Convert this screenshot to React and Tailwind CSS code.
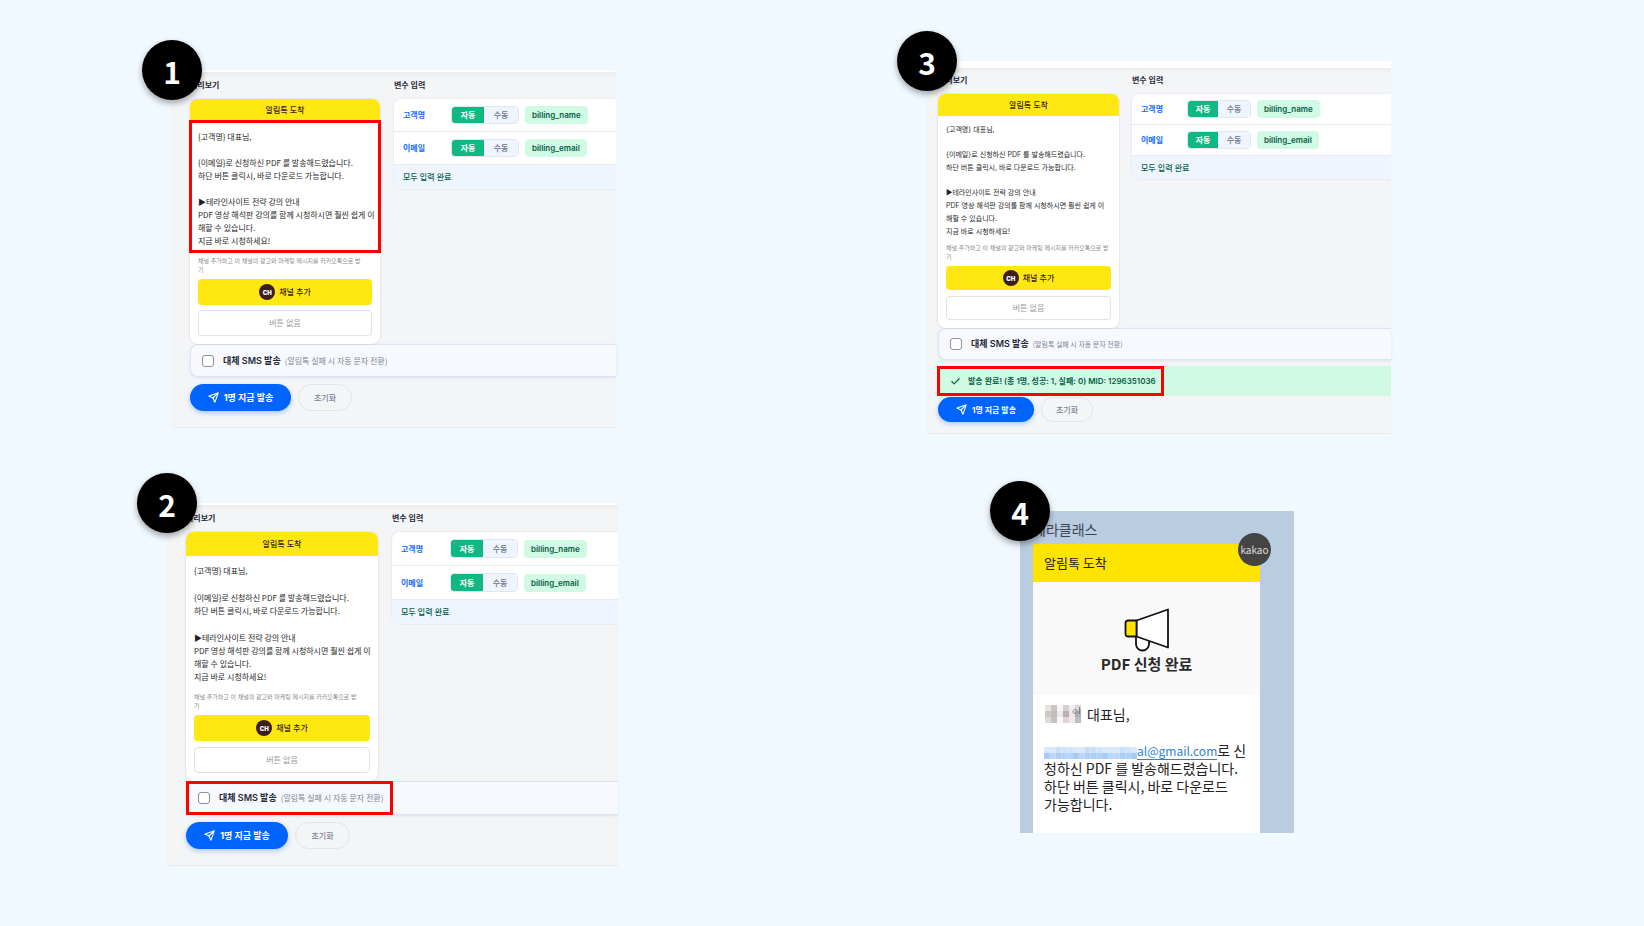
import { Send, Check } from "lucide-react";

const SIZES = {
  a: {
    outer: "ml-[5px] w-[444px]",
    panel: "border-t-2 pl-[18px] pt-[6px] pb-4",
    columns: "gap-[14px]",
    card: "w-[190px]",
    head: "h-[21px]",
    message: "gap-[13px] pt-[10px] pb-[6px] leading-[13px] text-[8px] font-['Noto_Sans_CJK_KR',sans-serif]",
    notice: "pt-[3px]",
    buttons: "gap-[5px] pt-[5px]",
    button: "h-[26px]",
    row: "h-[33px]",
    footer: "h-[24px]",
    label: "w-[48px]",
    toggle: "h-[18px] w-[68px]",
    sms: "h-[33px]",
    smsHint: "text-[8px]",
    actions: "pt-[7px]",
    send: "h-[27px] w-[101px] text-[9px]",
    reset: "h-[27px] w-[54px]",
  },
  b: {
    outer: "w-[451px]",
    panel: "border-t-2 pl-[19px] pt-[6px] pb-4",
    columns: "gap-[14px]",
    card: "w-[192px]",
    head: "h-[24px]",
    message: "gap-[14px] pt-[8px] pb-[8px] leading-[13px] text-[8px] font-['Noto_Sans_CJK_KR',sans-serif]",
    notice: "pt-[1px]",
    buttons: "gap-[6px] pt-[5px]",
    button: "h-[26px]",
    row: "h-[34px]",
    footer: "h-[24px]",
    label: "w-[49px]",
    toggle: "h-[19px] w-[68px]",
    sms: "h-[34px]",
    smsHint: "text-[8px]",
    actions: "pt-[7px]",
    send: "h-[27px] w-[102px] text-[9px]",
    reset: "h-[27px] w-[55px]",
  },
  c: {
    outer: "w-[464px]",
    panel: "border-t-7 pl-[11px] pt-[5px] pb-[11px]",
    columns: "gap-[13px]",
    card: "w-[181px]",
    head: "h-[22px]",
    message: "gap-[12px] pt-[7px] pb-[2px] leading-[13px] text-[7px]",
    notice: "pt-[3px]",
    buttons: "gap-[6px] pt-[5px]",
    button: "h-[24px]",
    row: "h-[31px]",
    footer: "h-[23px]",
    label: "w-[46px]",
    toggle: "h-[18px] w-[64px]",
    sms: "h-[32px]",
    smsHint: "text-[7px]",
    actions: "pt-[1px]",
    send: "h-[25px] w-[96px] text-[8px]",
    reset: "h-[25px] w-[52px]",
  },
};

function Badge({ n }) {
  return (
    <span className="absolute -left-[30px] -top-[30px] z-20 flex size-[60px] items-center justify-center rounded-full bg-black pt-px font-['Noto_Sans_CJK_KR',sans-serif] text-[30px] leading-none font-bold text-white shadow-[0_3px_6px_rgba(0,0,0,0.35)]">
      {n}
    </span>
  );
}

function RedFrame() {
  return <span className="pointer-events-none absolute -left-px -right-px top-0 bottom-0 z-10 border-[3px] border-[#ff0000]" />;
}

function MessageCard({ s, highlight }) {
  return (
    <div className={`${s.card} rounded-[8px] bg-white shadow-[0_0_2px_rgba(0,0,0,0.18)]`}>
      <div className={`${s.head} flex items-center justify-center rounded-t-[8px] bg-[#ffe812] text-[8px] font-medium text-[#3c1e1e]`}>
        알림톡 도착
      </div>
      <div className={`${s.message} relative flex flex-col pl-[8px] whitespace-nowrap text-[#1f1f1f]`}>
        {highlight && <RedFrame />}
        <p>{"{고객명} 대표님,"}</p>
        <p>
          {"{이메일}로 신청하신 PDF 를 발송해드렸습니다."}
          <br />
          하단 버튼 클릭시, 바로 다운로드 가능합니다.
        </p>
        <p>
          ▶테라인사이트 전략 강의 안내
          <br />
          PDF 영상 해석판 강의를 함께 시청하시면 훨씬 쉽게 이
          <br />
          해할 수 있습니다.
          <br />
          지금 바로 시청하세요!
        </p>
      </div>
      <p className={`${s.notice} pl-[8px] text-[6px] leading-[9px] whitespace-nowrap text-[#8a8a8a]`}>
        채널 추가하고 이 채널의 광고와 마케팅 메시지를 카카오톡으로 받
        <br />기
      </p>
      <div className={`${s.buttons} flex flex-col px-[8px] pb-[8px]`}>
        <button className={`${s.button} flex items-center justify-center gap-[4px] rounded-[4px] bg-[#ffe812] text-[8px] font-medium text-[#3c1e1e]`}>
          <span className="flex size-[16px] items-center justify-center rounded-full bg-[#3c1e1e] text-[6px] font-black text-white">CH</span>
          채널 추가
        </button>
        <button className={`${s.button} rounded-[4px] border border-[#dfe1e5] bg-white text-[8px] text-[#999999]`}>버튼 없음</button>
      </div>
    </div>
  );
}

function VariableRow({ s, label, value }) {
  return (
    <div className={`${s.row} flex items-center border-b border-[#e9ebef] pl-[9px]`}>
      <span className={`${s.label} text-[8px] font-bold text-[#0f6bff]`}>{label}</span>
      <div className={`${s.toggle} flex overflow-hidden rounded-[4px] border border-[#e0e5f0] text-[8px]`}>
        <button className="-m-px flex-1 bg-[#10b981] font-bold text-white">자동</button>
        <button className="flex-1 bg-[#eff5ff] font-medium text-[#6b7280]">수동</button>
      </div>
      <span className="ml-[6px] rounded-[4px] bg-[#d1fae5] px-[7px] text-[8px] leading-[18px] font-semibold text-[#065f46]">{value}</span>
    </div>
  );
}

function ComposePanel({ n, size, highlight, result }) {
  const s = SIZES[size];
  const title = "mb-[7px] text-[8px] leading-[14px] font-bold text-[#1f2937]";
  return (
    <section className={`${s.outer} relative`}>
      <Badge n={n} />
      <div className={`${s.panel} border-white bg-[#f4f5f7] shadow-[inset_0_3px_3px_rgba(0,0,0,0.03),0_1px_0_#e9edf0]`}>
        <div className={`${s.columns} flex items-start`}>
          <div>
            <h2 className={title}>미리보기</h2>
            <MessageCard s={s} highlight={highlight === "message"} />
          </div>
          <div className="flex-1">
            <h2 className={title}>변수 입력</h2>
            <div className="overflow-hidden rounded-l-[8px] bg-white shadow-[0_0_1px_1px_#e8ebf1] [clip-path:inset(-2px_0_-2px_-2px)]">
              <VariableRow s={s} label="고객명" value="billing_name" />
              <VariableRow s={s} label="이메일" value="billing_email" />
              <div className={`${s.footer} flex items-center bg-[#eff5ff] pl-[9px] text-[8px] font-medium text-[#065f46]`}>모두 입력 완료</div>
            </div>
          </div>
        </div>
        <div className={`${s.sms} flex rounded-l-[8px] border-y border-l border-[#dde2f5] bg-[#f8f9ff] shadow-[0_1px_3px_rgba(80,100,180,0.12)]`}>
          <label className="relative -my-px flex items-center pr-[9px] pl-[11px] whitespace-nowrap">
            {highlight === "sms" && <RedFrame />}
            <input type="checkbox" className="size-[12px] appearance-none rounded-[3px] border border-[#8e9096] bg-white" />
            <span className="ml-[9px] text-[9px] font-semibold text-[#1f2937]">대체 SMS 발송</span>
            <span className={`${s.smsHint} ml-[4px] font-['Noto_Sans_CJK_KR',sans-serif] text-[#7b8494]`}>(알림톡 실패 시 자동 문자 전환)</span>
          </label>
        </div>
        {result && (
          <div className="mt-[6px] flex h-[30px] bg-[#d1fae5]">
            <p className="relative flex items-center gap-[7px] pr-[7px] pl-[12px] text-[8px] font-semibold whitespace-nowrap text-[#065f46]">
              <RedFrame />
              <Check className="size-[11px]" strokeWidth={2.5} />
              {result}
            </p>
          </div>
        )}
        <div className={`${s.actions} flex gap-[7px]`}>
          <button className={`${s.send} flex items-center justify-center gap-[5px] rounded-full bg-[#0064ff] font-bold text-white shadow-[0_2px_5px_rgba(0,100,255,0.3)]`}>
            <Send className="size-[11px]" strokeWidth={2.4} />
            1명 지금 발송
          </button>
          <button className={`${s.reset} rounded-full border border-[#e1e4e8] text-[8px] font-medium text-[#7b8494]`}>초기화</button>
        </div>
      </div>
    </section>
  );
}

function Megaphone() {
  return (
    <svg viewBox="0 0 46 44" className="h-[44px] w-[46px]" stroke="#111" strokeWidth="1.800" strokeLinejoin="round">
      <path d="M12 29v7a6.500 6.500 0 0 0 13 0v-4" fill="#fff" />
      <path d="M12.500 12.500 44 1.500v38L12.500 28.500z" fill="#fff" />
      <path d="M12.500 12.500H4a2.500 2.500 0 0 0-2.500 2.500v11A2.500 2.500 0 0 0 4 28.500h8.500z" fill="#ffe400" />
    </svg>
  );
}

function ChatPanel() {
  return (
    <section className="relative ml-[93px] flex w-[274px] flex-col bg-[#bacce0] pl-[13px] pt-[8px] font-['Noto_Sans_CJK_KR',sans-serif] text-[14px] text-[#222]">
      <Badge n={4} />
      <h2 className="mb-[5px] leading-5 text-[#3b4550]">테라클래스</h2>
      <div className="relative w-[227px] bg-white">
        <span className="absolute -top-[11px] -right-[11px] flex size-[33px] items-center justify-center rounded-full bg-[#444] text-[10px] text-[#ddd]">kakao</span>
        <div className="flex h-[38px] items-center bg-[#ffe400] pl-[11px] text-[13px]">알림톡 도착</div>
        <div className="flex h-[113px] flex-col items-center bg-[#f9f9f9] pt-[26px]">
          <Megaphone />
          <strong className="text-[15px] leading-[24px] font-bold text-[#2a2a2a]">PDF 신청 완료</strong>
        </div>
        <div className="flex flex-col gap-[18px] pt-[10px] pb-[20px] pl-[11px] leading-[18px] whitespace-nowrap">
          <p className="flex items-center gap-[5px]">
            <NameMosaic />
            대표님,
          </p>
          <p>
            <a href="#mail" className="text-[12px] leading-none text-[#2f7fd8] underline underline-offset-3">
              <MailMosaic />
              al@gmail.com
            </a>
            로 신
            <br />
            청하신 PDF 를 발송해드렸습니다.
            <br />
            하단 버튼 클릭시, 바로 다운로드
            <br />
            가능합니다.
          </p>
        </div>
      </div>
    </section>
  );
}

function NameMosaic() {
  const cells = [
    "#e6e3e0", "#cbc6c4", "#f6f4f4", "#d5cfd4", "#f3edf0", "#d6d6da",
    "#cfc9c6", "#c2bdbd", "#eee8ea", "#b9b0b8", "#efe4e8", "#b0aeb6",
    "#e2dad4", "#c6c2c2", "#fbf7f7", "#e3d2d8", "#f1e8ec", "#bdbcc2",
  ];
  return (
    <svg viewBox="0 0 36 18" className="h-[18px] w-[38px]">
      {cells.map((c, i) => (
        <rect key={i} x={(i % 6) * 6} y={Math.floor(i / 6) * 6} width="6" height="6" fill={c} />
      ))}
      <path d="M30 4.500a2 2 0 1 0 .1 0M34.500 2v7M34.500 5h1.500" fill="none" stroke="#77757c" strokeWidth="0.900" />
    </svg>
  );
}

function MailMosaic() {
  const top = ["#d9e9fb", "#cfe3fa", "#c8dff9", "#d9e9fb"];
  const bottom = ["#a5cbf5", "#b2d3f7", "#abcff6", "#bbd8f8"];
  return (
    <svg viewBox="0 0 96 12" preserveAspectRatio="none" className="inline h-[12px] w-[93px] align-[-3px]">
      {Array.from({ length: 32 }, (_, i) => (
        <rect key={i} x={(i % 16) * 6} y={i < 16 ? 0 : 6} width="6" height="6" fill={(i < 16 ? top : bottom)[(i * 3 + (i >> 2)) % 4]} />
      ))}
    </svg>
  );
}

export default function App() {
  return (
    <main className="flex min-h-screen bg-[#f0f9ff] pb-[60px] font-['Inter','Noto_Sans_CJK_KR',sans-serif]">
      <div className="flex w-1/2 flex-col items-start gap-[76px] pt-[70px] pl-[167px]">
        <ComposePanel n={1} size="a" highlight="message" />
        <ComposePanel n={2} size="b" highlight="sms" />
      </div>
      <div className="flex w-1/2 flex-col items-start gap-[78px] pt-[61px] pl-[105px]">
        <ComposePanel n={3} size="c" result="발송 완료! (총 1명, 성공: 1, 실패: 0) MID: 1296351036" />
        <ChatPanel />
      </div>
    </main>
  );
}
